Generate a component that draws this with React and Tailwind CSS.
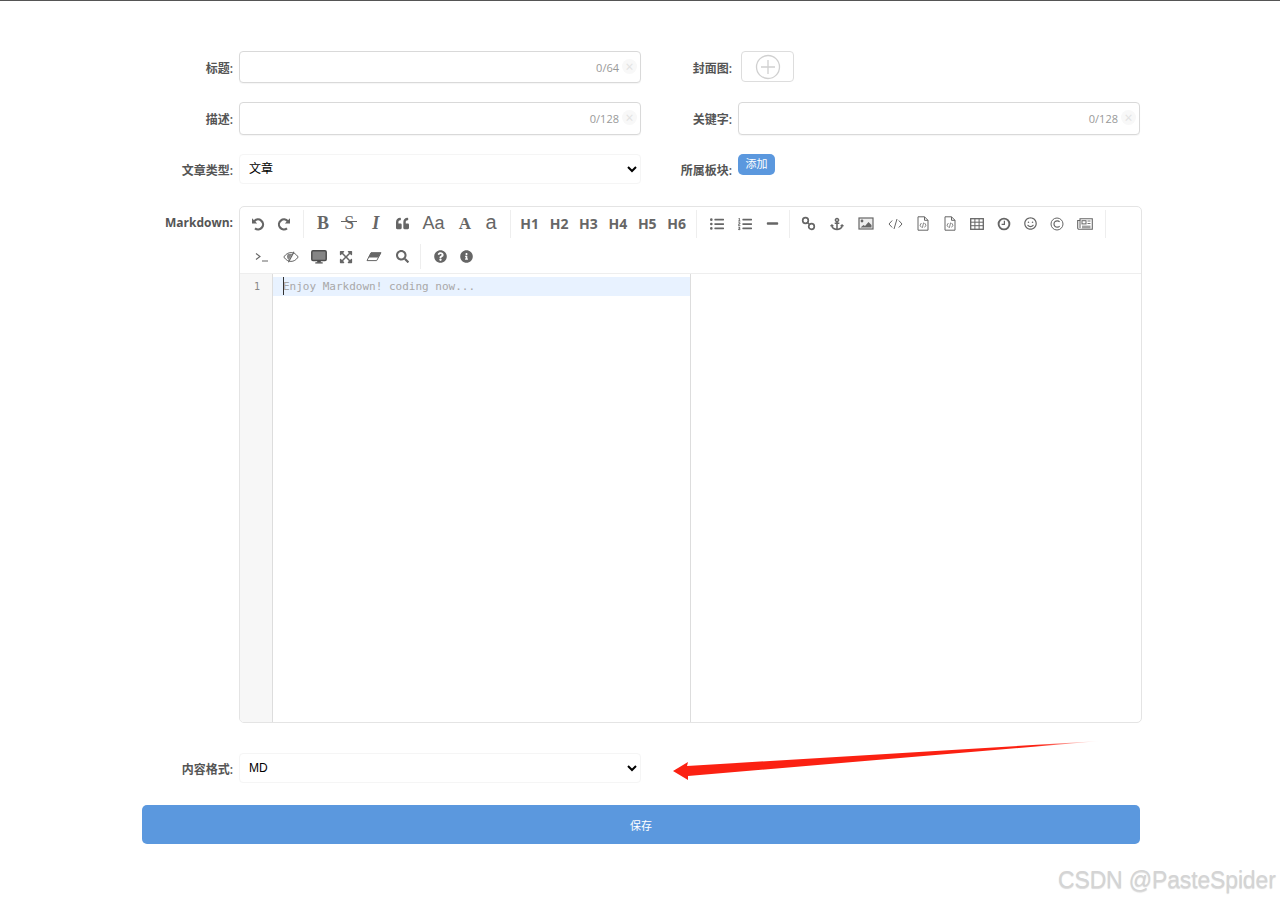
import {
  FaQuoteLeft, FaListUl, FaListOl, FaMinus, FaAnchor, FaRegSmile, FaExpandArrowsAlt, FaSearch, FaQuestionCircle, FaInfoCircle,
} from 'react-icons/fa';

const serif = { fontFamily: '"Liberation Serif", serif' };

function Tool({ className, children }) {
  return <span className={`flex items-center justify-center h-[27px] shrink-0 text-[#666] ${className}`}>{children}</span>;
}

function Divider({ className }) {
  return <span className={`w-px bg-[#eee] shrink-0 ${className}`} />;
}

function Heading({ children }) {
  return <Tool className="w-[29.4px] text-[14px] font-bold">{children}</Tool>;
}

function Label({ className = 'w-[91px]', children }) {
  return <label className={`${className} shrink-0 text-right text-xs font-semibold text-[#555] mr-[6px]`}>{children}</label>;
}

// toolbar drawings that the icon packs only have in a different weight
function Svg({ w = 16, h = 16, children }) {
  return (
    <svg width={w} height={h} viewBox={`0 0 ${w} ${h}`} fill="none" stroke="currentColor" strokeWidth="1">
      {children}
    </svg>
  );
}

const UndoIcon = () => (
  <Svg w={14} h={14}>
    <path d="M3.2 4.2A5 5 0 1 1 4 11.4" strokeWidth="2.2" />
    <path d="M1 1.2v5.2h5.2z" fill="currentColor" stroke="none" />
  </Svg>
);
const RedoIcon = () => (
  <Svg w={14} h={14}>
    <path d="M10.8 4.2A5 5 0 1 0 10 11.4" strokeWidth="2.2" />
    <path d="M13 1.2v5.2H7.8z" fill="currentColor" stroke="none" />
  </Svg>
);
const LinkIcon = () => (
  <Svg w={15} h={15}>
    <circle cx="4.5" cy="4.5" r="2.8" strokeWidth="1.7" />
    <circle cx="10.5" cy="10.5" r="2.8" strokeWidth="1.7" />
    <path d="M6 6l3 3" strokeWidth="1.7" />
  </Svg>
);
const ImageIcon = () => (
  <Svg w={16} h={13}>
    <rect x="1" y="1" width="14" height="11" strokeWidth="1.2" fill="#eee" />
    <circle cx="4" cy="4" r="1.4" fill="currentColor" stroke="none" />
    <path d="M2.5 10.5l3-2.5 1.5 1 3.5-4 3 3v2.5z" fill="currentColor" stroke="none" />
  </Svg>
);
const CodeIcon = () => (
  <Svg w={15} h={12}>
    <path d="M4.2 2.5L1 6l3.2 3.5M10.8 2.5L14 6l-3.2 3.5M9 1L6 11" strokeWidth="1" />
  </Svg>
);
const FileCodeIcon = () => (
  <Svg w={12} h={15}>
    <path d="M1 .8h6.5L11 4.3v9.9H1z" strokeWidth="1" />
    <path d="M7.5 .8v3.5H11" strokeWidth="1" />
    <path d="M4.4 7L3 9.2l1.4 2.2M7.6 7L9 9.2l-1.4 2.2M6.6 6.6l-1.2 5.2" strokeWidth=".8" />
  </Svg>
);
const TableIcon = () => (
  <Svg w={14} h={12}>
    <rect x=".7" y=".7" width="12.6" height="10.6" strokeWidth="1.3" />
    <path d="M.7 4.2h12.6M.7 7.7h12.6M4.9 .7v10.6M9.1 .7v10.6" strokeWidth="1" />
  </Svg>
);
const ClockIcon = () => (
  <Svg w={14} h={14}>
    <circle cx="7" cy="7" r="5.4" strokeWidth="1.9" />
    <path d="M7.4 3.8v3.6H4.6" strokeWidth="1.2" />
  </Svg>
);
const CopyrightIcon = () => (
  <Svg w={14} h={14}>
    <circle cx="7" cy="7" r="6" strokeWidth="1" />
    <path d="M9.6 4.9A3.2 3.2 0 1 0 9.6 9.1" strokeWidth="1.2" />
  </Svg>
);
const NewsIcon = () => (
  <Svg w={16} h={12}>
    <path d="M3 .7h12.3v10.6H2A1.3 1.3 0 0 1 .7 10V2.5H3z" strokeWidth="1.1" />
    <path d="M3 2.5V10" strokeWidth="1" />
    <rect x="5" y="2.7" width="4" height="3.2" strokeWidth="1" />
    <path d="M10.5 3h3M10.5 5.5h3M5 8.2h8.5M5 9.8h8.5" strokeWidth=".9" />
  </Svg>
);
const TerminalIcon = () => (
  <Svg w={14} h={10}>
    <path d="M1 1.5L5 4.5 1 7.5M7 9h6" strokeWidth="1.1" />
  </Svg>
);
const EyeSlashIcon = () => (
  <Svg w={16} h={12}>
    <path d="M.8 6C3 2.8 5.4 1.6 8 1.6s5 1.2 7.2 4.4C13 9.2 10.6 10.4 8 10.4S3 9.2.8 6z" strokeWidth="1" />
    <path d="M5 2.8A4.2 4.2 0 0 0 5.8 9L9.2 3z" fill="#888" stroke="none" />
    <path d="M11 .8L5.4 11.2" strokeWidth="1.2" />
  </Svg>
);
const DesktopIcon = () => (
  <svg width="16" height="14" viewBox="0 0 16 14">
    <rect x=".8" y=".8" width="14.4" height="9.6" rx="1.2" fill="#858585" stroke="#4d4d4d" strokeWidth="1.5" />
    <rect x="6.2" y="10.5" width="3.6" height="2" fill="#4d4d4d" />
    <rect x="4.2" y="12.2" width="7.6" height="1.4" rx=".6" fill="#4d4d4d" />
  </svg>
);
const EraserIcon = () => (
  <Svg w={16} h={10}>
    <path d="M5 .7h10L10.7 8.6H1z" strokeWidth="1" />
    <path d="M5 .7h10l-2.8 4.9H2.4z" fill="currentColor" stroke="none" />
  </Svg>
);

function CountInput({ count, height = 'h-[33px]' }) {
  return (
    <div className={`relative w-[402px] ${height} border border-[#d9d9d9] rounded-[4px] bg-white flex items-center justify-end shadow-[0_1px_1px_rgba(0,0,0,0.04)]`}>
      <span className="text-[11px] text-[#999] mr-[21px] mt-[2px]">{count}</span>
      <span className="absolute right-[3px] top-[7px] w-[15px] h-[15px] rounded-full bg-[#f8f8f8] text-[#e2e2e2] text-[14px] leading-[15px] text-center">×</span>
    </div>
  );
}

function Select({ options }) {
  return (
    <select className="w-[402px] h-[30px] border border-[#f5f5f5] rounded-[4px] bg-white text-xs text-black pl-[5px] outline-none font-['Liberation_Sans','Noto_Sans_CJK_SC',sans-serif]">
      {options.map((o) => <option key={o}>{o}</option>)}
    </select>
  );
}

export default function App() {
  return (
    <div className="relative h-[901px] overflow-hidden bg-white border-t border-[#555] font-['Open_Sans','Noto_Sans_CJK_SC',sans-serif]">
      <div className="ml-[142px] w-[998px] pt-[50px]">
        <div className="flex h-[32px] items-center mb-[19px]">
          <div className="flex items-center w-[499px]">
            <Label><span className="relative top-[2px]">标题:</span></Label>
            <CountInput count="0/64" height="h-[32px]" />
          </div>
          <div className="flex items-center self-start">
            <Label><span className="relative top-[2px]">封面图:</span></Label>
            <div className="ml-[3px] w-[53px] h-[31px] border border-[#ddd] rounded-[4px] flex items-center justify-center">
              <svg width="26" height="26" viewBox="0 0 26 26" fill="none" stroke="#d0d0d0" strokeWidth="1.3">
                <circle cx="13" cy="13" r="11.5" />
                <path d="M13 6v14M6 13h14" />
              </svg>
            </div>
          </div>
        </div>

        <div className="flex h-[33px] items-center mb-[19px]">
          <div className="flex items-center w-[499px]">
            <Label><span className="relative top-[1px]">描述:</span></Label>
            <CountInput count="0/128" />
          </div>
          <div className="flex items-center">
            <Label><span className="relative top-[1px]">关键字:</span></Label>
            <CountInput count="0/128" />
          </div>
        </div>

        <div className="flex h-[30px] mb-[22px]">
          <div className="flex items-center w-[499px]">
            <Label><span className="relative top-[2px]">文章类型:</span></Label>
            <Select options={['文章']} />
          </div>
          <div className="flex items-start">
            <Label><span className="relative top-[9px]">所属板块:</span></Label>
            <button className="w-[37px] h-[21px] rounded-[5px] bg-[#5b98de] text-white text-[11px]">添加</button>
          </div>
        </div>

        <div className="flex items-start">
          <Label><span className="relative top-[9px] font-bold">Markdown:</span></Label>
          <div className="w-[903px] shrink-0 h-[517px] border border-[#e4e4e4] rounded-[5px] bg-white flex flex-col overflow-hidden">
            <div className="h-[67px] shrink-0 border-b border-[#eee] pl-[5px]">
              <div className="flex items-center h-[33px]">
                <Tool className="w-[26px]"><UndoIcon /></Tool>
                <Tool className="w-[26px]"><RedoIcon /></Tool>
                <Divider className="h-[28px] mx-[6px]" />
                <Tool className="w-[26px] text-[18px] font-bold"><span style={serif}>B</span></Tool>
                <Tool className="w-[26.5px] text-[18px] font-normal">
                  <span style={serif} className="relative">
                    S
                    <span className="absolute left-[-3px] right-[-3px] top-[11px] h-px bg-[#666]" />
                  </span>
                </Tool>
                <Tool className="w-[26.5px] text-[18px] font-bold italic"><span style={serif}>I</span></Tool>
                <Tool className="w-[26px]"><FaQuoteLeft size={13} /></Tool>
                <Tool className="w-[37px] text-[18px] font-normal"><span className="font-['Liberation_Sans',sans-serif]">Aa</span></Tool>
                <Tool className="w-[26px] text-[17px] font-bold"><span style={serif}>A</span></Tool>
                <Tool className="w-[26px] text-[20px] font-normal"><span className="relative -top-[2px] font-['Liberation_Sans',sans-serif]">a</span></Tool>
                <Divider className="h-[28px] ml-[6px] mr-[4px]" />
                {['H1', 'H2', 'H3', 'H4', 'H5', 'H6'].map((h) => <Heading key={h}>{h}</Heading>)}
                <Divider className="h-[28px] ml-[5px] mr-[6px]" />
                <Tool className="w-[28px]"><FaListUl size={14} /></Tool>
                <Tool className="w-[28px]"><FaListOl size={14} /></Tool>
                <Tool className="w-[26px]"><FaMinus size={13} /></Tool>
                <Divider className="h-[28px] mx-[4px]" />
                <Tool className="w-[29px]"><LinkIcon /></Tool>
                <Tool className="w-[28px]"><FaAnchor size={14} /></Tool>
                <Tool className="w-[30px]"><ImageIcon /></Tool>
                <Tool className="w-[28px]"><CodeIcon /></Tool>
                <Tool className="w-[28px]"><FileCodeIcon /></Tool>
                <Tool className="w-[26px]"><FileCodeIcon /></Tool>
                <Tool className="w-[28px]"><TableIcon /></Tool>
                <Tool className="w-[26px]"><ClockIcon /></Tool>
                <Tool className="w-[26px]"><FaRegSmile size={13} /></Tool>
                <Tool className="w-[28px]"><CopyrightIcon /></Tool>
                <Tool className="w-[28px]"><NewsIcon /></Tool>
                <Divider className="h-[28px] mx-[6px]" />
              </div>
              <div className="flex items-center h-[33px]">
                <Tool className="w-[33px]"><TerminalIcon /></Tool>
                <Tool className="w-[25px]"><EyeSlashIcon /></Tool>
                <Tool className="w-[31px]"><DesktopIcon /></Tool>
                <Tool className="w-[24px]"><FaExpandArrowsAlt size={14} /></Tool>
                <Tool className="w-[32px]"><EraserIcon /></Tool>
                <Tool className="w-[24px]"><FaSearch size={13} /></Tool>
                <Divider className="h-[25px] ml-[6px] mr-[5px]" />
                <Tool className="w-[26px] ml-[1px]"><FaQuestionCircle size={13} /></Tool>
                <Tool className="w-[27px]"><FaInfoCircle size={13} /></Tool>
              </div>
            </div>

            <div className="flex flex-1 min-h-0">
              <div className="w-[33px] shrink-0 bg-[#f7f7f7] border-r border-[#ddd] pt-[3px]">
                <div className="h-[19px] leading-[19px] text-[10px] text-[#888] text-center pl-[2px] font-['DejaVu_Sans_Mono',monospace]">1</div>
              </div>
              <div className="w-[418px] shrink-0 border-r border-[#ddd] pt-[3px]">
                <div className="relative h-[19px] leading-[19px] bg-[#e8f2ff] pl-[10px] text-[11px] text-[#a8a8a8] font-['DejaVu_Sans_Mono',monospace]">
                  <span className="absolute left-[10px] top-0 w-px h-[18px] bg-[#333]" />
                  Enjoy Markdown! coding now...
                </div>
              </div>
              <div className="flex-1" />
            </div>
          </div>
        </div>

        <div className="flex items-center h-[30px] mt-[30px] mb-[22px]">
          <Label><span className="relative top-[2px]">内容格式:</span></Label>
          <Select options={['MD']} />
        </div>

        <button className="block w-[998px] h-[39px] pt-[3px] rounded-[5px] bg-[#5b98de] text-white text-[11px]">保存</button>
      </div>

      <svg className="absolute left-[660px] top-[730px]" width="450" height="60" viewBox="660 730 450 60">
        <defs>
          <linearGradient id="tail" x1="0" x2="1" y1="0" y2="0">
            <stop offset="0" stopColor="#fb2112" />
            <stop offset="0.85" stopColor="#fb2112" />
            <stop offset="1" stopColor="#fb2112" stopOpacity="0" />
          </linearGradient>
        </defs>
        <path d="M673 770 L688 761 L687 765 L1100 740 L688 775 L688 779 Z" fill="url(#tail)" />
      </svg>

      <div className="absolute left-[1058px] top-[864px] text-[23px] tracking-[-0.15px] leading-[30px] whitespace-nowrap text-[#d4d4d4] font-['Liberation_Sans',sans-serif] [text-shadow:0_1px_1px_rgba(0,0,0,0.15)]">
        CSDN @PasteSpider
      </div>
    </div>
  );
}
